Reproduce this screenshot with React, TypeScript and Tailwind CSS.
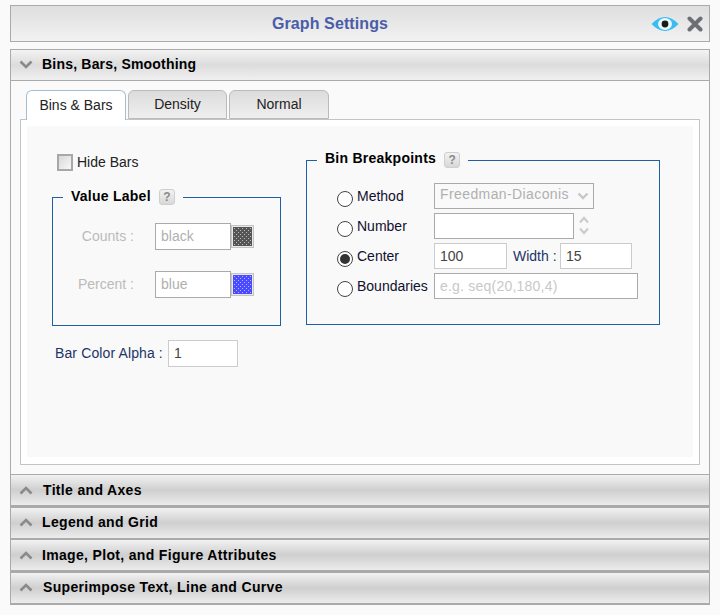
import React from "react";

const Help = () => (
  <span className="inline-flex h-[16px] w-[16px] items-center justify-center rounded-[3px] border border-[#cfcfcf] bg-gradient-to-b from-[#f2f2f2] to-[#d8d8d8] text-[12px] font-bold leading-none tracking-normal text-[#8a8a8a]">?</span>
);

const Chevron = ({ up }: { up?: boolean }) => (
  <svg width="14" height="9" viewBox="0 0 14 9" className="shrink-0">
    <path d={up ? "M1.5 7.5 L7 2 L12.5 7.5" : "M1.5 1.5 L7 7 L12.5 1.5"} fill="none" stroke="#8a8a8a" strokeWidth="2.6" />
  </svg>
);

const Swatch = ({ color, id }: { color: string; id: string }) => (
  <span className="inline-flex h-[23px] w-[23px] border border-[#c4c4c4] bg-[#e8e8e8] p-[1px]">
    <svg width="19" height="19" viewBox="0 0 19 19">
      <defs>
        <pattern id={id} width="4" height="4" patternUnits="userSpaceOnUse">
          <rect width="4" height="4" fill={color} />
          <rect x="1" y="1" width="1" height="1" fill="#ffffff" opacity="0.6" />
          <rect x="3" y="3" width="1" height="1" fill="#ffffff" opacity="0.6" />
        </pattern>
      </defs>
      <rect width="19" height="19" fill={`url(#${id})`} />
    </svg>
  </span>
);

const Radio = ({ checked }: { checked?: boolean }) => (
  <span className="mt-[8px] inline-flex h-[16px] w-[16px] shrink-0 items-center justify-center rounded-full border border-[#444] bg-white">
    {checked && <span className="h-[10px] w-[10px] rounded-full bg-[#333]" />}
  </span>
);

const Field = ({ value, w, muted, strong, h = "h-[26px]" }: { value: string; w: string; muted?: boolean; strong?: boolean; h?: string }) => (
  <span className={`${w} ${h} flex items-center border-[1px] ${strong ? "border-[#aaaaaa]" : "border-[#cccccc]"} bg-white px-[5px] text-[14px] ${muted ? "text-[#b0b0b0]" : "text-[#444]"}`}>{value}</span>
);

const Collapsed = ({ title, ml, box }: { title: string; ml: string; box: string }) => (
  <div className={`${box} flex items-center border-x border-[#aaaaaa] bg-gradient-to-b from-[#f2f2f2] via-[#cfcfcf] to-[#ececec] pl-[8px] text-[14px] font-bold tracking-[0.33px] text-black`}>
    <Chevron up />
    <span className={ml}>{title}</span>
  </div>
);

const Row = ({ label, checked, children }: { label: string; checked?: boolean; children: React.ReactNode }) => (
  <div className="flex h-[26px] items-start">
    <div className="flex w-[97px] gap-[4px]">
      <Radio checked={checked} />
      <span className="text-[14px] leading-[26px] text-[#101030]">{label}</span>
    </div>
    {children}
  </div>
);

export default function App() {
  return (
    <div className="h-[615px] w-[720px] bg-[#fafafa] px-[10px] pt-[5px] font-['Liberation_Sans',Arial,sans-serif]">
      <div className="relative flex h-[37px] items-center justify-center border border-[#aaaaaa] bg-gradient-to-b from-[#dedede] to-[#f2f2f2] pr-[60px] text-[16px] font-bold tracking-[0.1px] text-[#4a5da8]">
        Graph Settings
        <div className="absolute right-[6px] top-[10px] flex items-center gap-[8px]">
          <svg width="28" height="16" viewBox="0 0 28 16">
            <path d="M0.5 8 Q14 -6 27.5 8 Q14 22 0.5 8 Z" fill="#37bdf0" />
            <ellipse cx="14" cy="8" rx="7" ry="6" fill="#eaf8fe" />
            <circle cx="14" cy="8" r="3.4" fill="#1a1a1a" />
          </svg>
          <svg width="16" height="16" viewBox="0 0 16 16">
            <path d="M2.5 2.5 L13.5 13.5 M13.5 2.5 L2.5 13.5" stroke="#6b7074" strokeWidth="4" strokeLinecap="round" />
          </svg>
        </div>
      </div>

      <div className="mt-[7px] border-x border-t border-[#aaaaaa]">
        <div className="flex h-[31px] items-center border-b border-[#aaaaaa] bg-gradient-to-b from-[#f3f3f3] via-[#dcdcdc] to-[#f0f0f0] pb-[1px] pl-[8px] text-[14px] font-bold tracking-[0.2px] text-black">
          <Chevron />
          <span className="ml-[9px]">Bins, Bars, Smoothing</span>
        </div>
        <div className="h-[393px] bg-[#fafafa] px-[9px] pt-[9px]">
          <div className="relative z-10 flex gap-[2px] pl-[6px] text-[14px] text-[#222]">
            <div className="flex h-[30px] w-[100px] items-center justify-center rounded-t-[6px] border border-b-0 border-[#a8bdd0] bg-white">Bins &amp; Bars</div>
            <div className="flex h-[29px] w-[99px] items-center justify-center rounded-t-[6px] border border-[#bbbbbb] bg-gradient-to-b from-[#dcdcdc] to-[#efefef]">Density</div>
            <div className="flex h-[29px] w-[100px] items-center justify-center rounded-t-[6px] border border-[#bbbbbb] bg-gradient-to-b from-[#dcdcdc] to-[#efefef]">Normal</div>
          </div>
          <div className="-mt-px h-[346px] border border-[#c4c4c4] bg-white p-[6px]">
            <div className="flex h-[331px] gap-[25px] bg-[#f9f9f9] pl-[25px]">
              <div className="w-[229px]">
                <div className="mt-[26px] flex items-center gap-[4px] pl-[5px] text-[14px] text-[#222]">
                  <span className="h-[17px] w-[16px] border-2 border-[#a8a8a8] bg-gradient-to-br from-[#d8d8d8] to-[#f8f8f8]" />
                  Hide Bars
                </div>
                <fieldset className="mt-[16px] h-[137px] border border-[#1f5fa5] pl-[10px]">
                  <legend className="flex items-start gap-[8px] px-[8px] text-[14px] font-bold tracking-[0.25px] text-black">
                    <span className="leading-[14px]">Value Label</span> <Help />
                  </legend>
                  <div className="mt-[18px] flex flex-col gap-[21px]">
                    <div className="flex items-center">
                      <span className="w-[71px] text-right text-[14px] text-[#bbbbbb]">Counts :</span>
                      <span className="ml-[21px] flex items-center">
                        <Field value="black" w="w-[76px]" h="h-[27px]" muted strong />
                        <Swatch color="#555555" id="a" />
                      </span>
                    </div>
                    <div className="flex items-center">
                      <span className="w-[71px] text-right text-[14px] text-[#bbbbbb]">Percent :</span>
                      <span className="ml-[21px] flex items-center">
                        <Field value="blue" w="w-[76px]" h="h-[27px]" muted strong />
                        <Swatch color="#4a4aff" id="b" />
                      </span>
                    </div>
                  </div>
                </fieldset>
                <div className="mt-[14px] flex items-center gap-[5px] pl-[3px] text-[14px] tracking-[0.12px] text-[#1c3468]">
                  Bar Color Alpha :
                  <Field value="1" w="w-[70px]" h="h-[27px]" />
                </div>
              </div>
              <fieldset className="mt-[26px] h-[173px] w-[354px] border border-[#1f5fa5] pl-[30px]">
                <legend className="-ml-[20px] flex items-start gap-[8px] px-[8px] text-[14px] font-bold tracking-[0.25px] text-black">
                  <span className="leading-[12px]">Bin Breakpoints</span> <Help />
                </legend>
                <div className="mt-[15px] flex flex-col gap-[4px]">
                  <Row label="Method">
                    <span className="flex h-[26px] w-[160px] items-start justify-between border border-[#aaaaaa] bg-[#f9f9f9] pl-[5px] pr-[4px] text-[14px] leading-[20px] tracking-[0.4px] text-[#b0b0b0]">
                      Freedman-Diaconis
                      <span className="mt-[8px]"><svg width="12" height="8" viewBox="0 0 12 8"><path d="M1.5 1.5 L6 6 L10.5 1.5" fill="none" stroke="#c8c8c8" strokeWidth="2.4" /></svg></span>
                    </span>
                  </Row>
                  <Row label="Number">
                    <Field value="" w="w-[140px]" strong />
                    <span className="ml-[5px] flex flex-col gap-[3px] pt-[3px]">
                      <svg width="10" height="8" viewBox="0 0 10 8"><path d="M1 6.5 L5 2 L9 6.5" fill="none" stroke="#cccccc" strokeWidth="2.2" /></svg>
                      <svg width="10" height="8" viewBox="0 0 10 8"><path d="M1 1.5 L5 6 L9 1.5" fill="none" stroke="#cccccc" strokeWidth="2.2" /></svg>
                    </span>
                  </Row>
                  <Row label="Center" checked>
                    <Field value="100" w="w-[73px]" />
                    <span className="ml-[6px] w-[47px] text-[14px] leading-[26px] text-[#1c3468]">Width :</span>
                    <Field value="15" w="w-[72px]" />
                  </Row>
                  <Row label="Boundaries">
                    <span className="flex h-[26px] w-[204px] items-center border border-[#aaaaaa] bg-white px-[5px] text-[14px] tracking-[0.22px] text-[#c8c8c8]">e.g. seq(20,180,4)</span>
                  </Row>
                </div>
              </fieldset>
            </div>
          </div>
        </div>
      </div>

      <div>
        <Collapsed title="Title and Axes" ml="ml-[10px]" box="h-[31px] border-t" />
        <Collapsed title="Legend and Grid" ml="ml-[9px]" box="h-[33px] border-t-[3px] pb-[1px]" />
        <Collapsed title="Image, Plot, and Figure Attributes" ml="ml-[9px]" box="h-[32px] border-t-2" />
        <Collapsed title="Superimpose Text, Line and Curve" ml="ml-[10px]" box="h-[33px] border-t-[3px] pb-[1px]" />
      </div>
      <div className="h-[2px] bg-[#aaaaaa]" />
    </div>
  );
}
